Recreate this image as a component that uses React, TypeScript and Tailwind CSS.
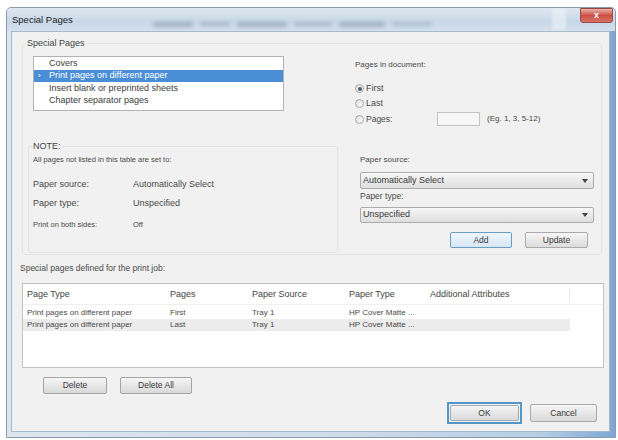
import React from "react";

function Radio({ checked }: { checked?: boolean }) {
  return (
    <span className="w-[9px] h-[9px] shrink-0 rounded-full border border-[#a8a8a8] bg-gradient-to-br from-[#dcdcdc] to-white flex items-center justify-center">
      {checked && <span className="w-[4px] h-[4px] rounded-full bg-[#4d5d72]" />}
    </span>
  );
}

function Combo({ value }: { value: string }) {
  return (
    <div className="w-[234px] h-full border border-[#acacac] rounded-[2px] bg-gradient-to-b from-[#f7f7f7] to-[#dedede] flex items-center justify-between pl-[2px] pr-[5px] text-[9px] text-[#383838]">
      <span>{value}</span>
      <svg width="6" height="4" viewBox="0 0 6 4">
        <path d="M0 0h6L3 4z" fill="#444" />
      </svg>
    </div>
  );
}

function Btn({ label, className }: { label: string; className: string }) {
  return (
    <button
      className={
        "rounded-[2px] border bg-gradient-to-b flex items-center justify-center text-[8.5px] leading-none text-[#3a3a3a] " +
        className
      }
    >
      {label}
    </button>
  );
}

const items = [
  "Covers",
  "Print pages on different paper",
  "Insert blank or preprinted sheets",
  "Chapter separator pages",
];

export default function App() {
  return (
    <div className="w-[618px] h-[440px] bg-white pt-[7px] pl-[6px] font-['Liberation_Sans',Arial,sans-serif] text-[#4a4a4a]">
      <div className="w-[610px] h-[431px] flex flex-col rounded-t-[5px] border border-[#8b9aab] bg-[linear-gradient(to_right,#dde6ef_0%,#cfdcea_55%,#b6cde4_88%,#7da7d4_100%)] overflow-hidden">
        {/* title bar */}
        <div className="h-[23px] shrink-0 flex items-start pl-[5px] bg-[linear-gradient(to_bottom,#dfe7ef,#c8d8e8_60%,#d5e1ed)]">
          <span className="mt-[6px] text-[9.5px] leading-[11px] text-[#1c1c1c]">Special Pages</span>
          <div className="ml-[80px] mt-[12px] h-[8px] flex items-center gap-[7px] blur-[2px] opacity-50">
            <span className="w-[40px] h-[5px] bg-[#7a889a]" />
            <span className="w-[30px] h-[4px] bg-[#8593a4]" />
            <span className="w-[50px] h-[5px] bg-[#7a889a]" />
            <span className="w-[38px] h-[4px] bg-[#8593a4]" />
            <span className="w-[46px] h-[5px] bg-[#7a889a]" />
            <span className="w-[40px] h-[4px] bg-[#93a0b0]" />
          </div>
          <div className="ml-[120px] w-[14px] h-[22px] bg-[#e8eff7] opacity-70 blur-[1px]" />
          <div className="ml-auto mr-[2px] w-[33px] h-[15px] rounded-b-[3px] border border-[#9a4a44] bg-gradient-to-b from-[#eab0a8] via-[#cc5046] to-[#d9726a] flex items-center justify-center text-white text-[9px] font-bold leading-none">
            x
          </div>
        </div>

        {/* client area */}
        <div className="flex-1 ml-[4px] mr-[5px] mb-[5px] bg-[#f1f1f1] border border-[#a6b9cd] flex flex-col text-[9px]">
          <fieldset className="ml-[10px] mt-[6px] w-[580px] h-[217px] border border-[#e4e4e4] rounded-[3px]">
            <legend className="ml-[3px] px-[1px] text-[9px] leading-[11px] text-[#444]">Special Pages</legend>
            <div className="flex">
              {/* left column */}
              <div className="w-[318px] flex flex-col">
                <div className="ml-[10px] mt-[7px] w-[251px] h-[55px] border border-[#b0b2b6] bg-white flex flex-col">
                  {items.map((it, i) => (
                    <div
                      key={it}
                      className={
                        "h-[12.5px] flex items-center pl-[4px] leading-none " +
                        (i === 1 ? "bg-[#4a8fd6] text-white" : "text-[#3c3c3c]")
                      }
                    >
                      <span className="w-[11px] text-[8px]">{i === 1 ? "›" : ""}</span>
                      <span>{it}</span>
                    </div>
                  ))}
                </div>

                <fieldset className="ml-[5px] mt-[30px] w-[310px] h-[112px] border border-[#e4e4e4] rounded-[2px]">
                  <legend className="ml-[4px] text-[9px] leading-[11px] text-[#444]">NOTE:</legend>
                  <div className="pl-[4px] flex flex-col">
                    <div className="mt-[2px] text-[7.5px] leading-[11px]">All pages not listed in this table are set to:</div>
                    <div className="mt-[14px] flex leading-[11px]">
                      <span className="w-[100px]">Paper source:</span>
                      <span>Automatically Select</span>
                    </div>
                    <div className="mt-[8px] flex leading-[11px]">
                      <span className="w-[100px]">Paper type:</span>
                      <span>Unspecified</span>
                    </div>
                    <div className="mt-[10px] flex leading-[11px] text-[7.5px]">
                      <span className="w-[100px]">Print on both sides:</span>
                      <span>Off</span>
                    </div>
                  </div>
                </fieldset>
              </div>

              {/* right column */}
              <div className="ml-[14px] w-[246px] flex flex-col">
                <div className="mt-[10px] text-[8px] leading-[11px]">Pages in document:</div>
                <div className="mt-[11px] h-[15px] flex items-center gap-[2px]">
                  <Radio checked />
                  <span className="text-[9px]">First</span>
                </div>
                <div className="h-[15px] flex items-center gap-[2px]">
                  <Radio />
                  <span className="text-[9px]">Last</span>
                </div>
                <div className="h-[16px] flex items-center gap-[2px]">
                  <Radio />
                  <span className="w-[69px] text-[8.5px]">Pages:</span>
                  <span className="w-[43px] h-[14px] border border-[#c4c4c4] bg-[#f7f7f7]" />
                  <span className="ml-[5px] text-[8px]">(Eg. 1, 3, 5-12)</span>
                </div>
                <div className="mt-[27px] ml-[5px] text-[8px] leading-[11px]">Paper source:</div>
                <div className="mt-[7px] ml-[5px] h-[17px]">
                  <Combo value="Automatically Select" />
                </div>
                <div className="mt-[2px] ml-[5px] text-[8.5px] leading-[11px]">Paper type:</div>
                <div className="mt-[5px] ml-[5px] h-[16px]">
                  <Combo value="Unspecified" />
                </div>
                <div className="mt-[9px] flex justify-end gap-[13px] pr-[13px]">
                  <Btn label="Add" className="w-[62px] h-[16px] border-[#6a9dc6] from-[#eef6fc] to-[#d6e7f4]" />
                  <Btn label="Update" className="w-[63px] h-[16px] border-[#aaaaaa] from-[#f6f6f6] to-[#dcdcdc]" />
                </div>
              </div>
            </div>
          </fieldset>

          <div className="ml-[8px] mt-[8px] text-[8.5px] leading-[11px]">Special pages defined for the print job:</div>

          <div className="ml-[10px] mt-[9px] w-[582px] h-[85px] border border-[#c2c2c2] bg-white flex flex-col">
            <div className="h-[21px] flex items-center pt-[2px] border-b border-[#f0f0f0] text-[9px] text-[#444]">
              <span className="w-[142px] pl-[4px]">Page Type</span>
              <span className="w-[82px] pl-[5px]">Pages</span>
              <span className="w-[97px] pl-[5px]">Paper Source</span>
              <span className="w-[81px] pl-[5px]">Paper Type</span>
              <span className="w-[145px] pl-[5px] border-r border-[#e8e8e8]">Additional Attributes</span>
            </div>
            <div className="mt-[2px] w-[547px] h-[12px] flex items-center text-[8px]">
              <span className="w-[142px] pl-[4px]">Print pages on different paper</span>
              <span className="w-[82px] pl-[5px]">First</span>
              <span className="w-[97px] pl-[5px]">Tray 1</span>
              <span className="w-[81px] pl-[5px]">HP Cover Matte ...</span>
            </div>
            <div className="w-[547px] h-[12px] flex items-center text-[8px] bg-[#ececec]">
              <span className="w-[142px] pl-[4px]">Print pages on different paper</span>
              <span className="w-[82px] pl-[5px]">Last</span>
              <span className="w-[97px] pl-[5px]">Tray 1</span>
              <span className="w-[81px] pl-[5px]">HP Cover Matte ...</span>
            </div>
          </div>

          <div className="mt-[9px] ml-[31px] flex gap-[13px]">
            <Btn label="Delete" className="w-[64px] h-[17px] border-[#a6a6a6] from-[#f6f6f6] to-[#d9d9d9]" />
            <Btn label="Delete All" className="w-[72px] h-[17px] border-[#a6a6a6] from-[#f6f6f6] to-[#d9d9d9]" />
          </div>

          <div className="mt-[8px] flex justify-end items-center gap-[8px] pr-[12px]">
            <div className="w-[75px] h-[22px] border-2 border-[#5596c9] p-[1px]">
              <Btn label="OK" className="w-full h-full border-[#a2acb5] from-[#f4f4f4] to-[#dadada]" />
            </div>
            <Btn label="Cancel" className="w-[67px] h-[18px] border-[#aaaaaa] from-[#f6f6f6] to-[#d9d9d9]" />
          </div>
        </div>
      </div>
    </div>
  );
}
